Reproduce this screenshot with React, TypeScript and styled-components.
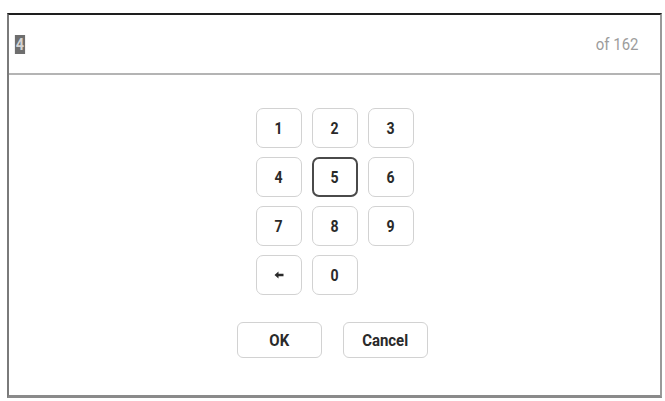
import styled, { createGlobalStyle } from "styled-components";

const KEYS = ["1", "2", "3", "4", "5", "6", "7", "8", "9", "←", "0"];

const GlobalStyle = createGlobalStyle`
  html, body {
    margin: 0;
    padding: 0;
    background: #ffffff;
    font-family: Roboto, "Liberation Sans", sans-serif;
  }
`;

const App = () => {
  return (
    <>
      <GlobalStyle />
      <Frame>
        <Header>
          <PageInput>4</PageInput>
          <PageTotal>of 162</PageTotal>
        </Header>
        <Body>
          <Keypad>
            {KEYS.map((key) => (
              <Key key={key} selected={key === "5"}>
                {key === "←" ? <BackArrow /> : <Narrow>{key}</Narrow>}
              </Key>
            ))}
          </Keypad>
          <Actions>
            <ActionButton>
              <Narrow>OK</Narrow>
            </ActionButton>
            <ActionButton>
              <Narrow>Cancel</Narrow>
            </ActionButton>
          </Actions>
        </Body>
      </Frame>
    </>
  );
};

const BackArrow = () => (
  <svg width="10" height="8" viewBox="0 0 10 8">
    <path d="M0.5 4 L4.5 0.5 L4.5 2.8 L9.5 2.8 L9.5 5.2 L4.5 5.2 L4.5 7.5 Z" fill="#2a2a2a" />
  </svg>
);

const Frame = styled.div`
  box-sizing: border-box;
  margin: 13px 0 0 7px;
  width: 655px;
  height: 385px;
  display: flex;
  flex-direction: column;
  border-top: 2px solid #1e1e1e;
  border-left: 2px solid #7a7a7a;
  border-right: 2px solid #9a9a9a;
  border-bottom: 3px solid #8a8a8a;
  background: #ffffff;
`;

const Header = styled.div`
  height: 58px;
  display: flex;
  align-items: center;
  justify-content: space-between;
  padding: 0 22px 0 5px;
  border-bottom: 2px solid #b4b4b4;
`;

const PageInput = styled.span`
  display: inline-block;
  background: #6e6e6e;
  color: #d4d4d4;
  font-size: 17px;
  font-weight: 700;
  line-height: 19px;
  padding: 0 1px;
  transform: scaleX(0.85);
`;

const PageTotal = styled.span`
  display: inline-block;
  color: #9c9c9c;
  font-size: 17px;
  transform: scaleX(0.88);
  transform-origin: right center;
`;

// condensed label text for the keypad and action buttons
const Narrow = styled.span`
  display: inline-block;
  transform: scaleX(0.88);
`;

const Body = styled.div`
  display: flex;
  flex-direction: column;
  align-items: center;
  padding-top: 33px;
`;

const Keypad = styled.div`
  display: grid;
  grid-template-columns: repeat(3, 46px);
  grid-auto-rows: 40px;
  column-gap: 10px;
  row-gap: 9px;
`;

const Key = styled.div<{ selected?: boolean }>`
  box-sizing: border-box;
  display: flex;
  align-items: center;
  justify-content: center;
  border: ${(p) => (p.selected ? "2px solid #4a4a4a" : "1px solid #d2d2d2")};
  border-radius: 7px;
  color: #2a2a2a;
  font-size: 16px;
  font-weight: 700;
`;

const Actions = styled.div`
  display: flex;
  gap: 21px;
  margin-top: 27px;
  margin-right: 4px;
`;

const ActionButton = styled.div`
  box-sizing: border-box;
  width: 85px;
  height: 36px;
  display: flex;
  align-items: center;
  justify-content: center;
  border: 1px solid #d2d2d2;
  border-radius: 6px;
  color: #2a2a2a;
  font-size: 17px;
  font-weight: 700;
`;

export default App;
